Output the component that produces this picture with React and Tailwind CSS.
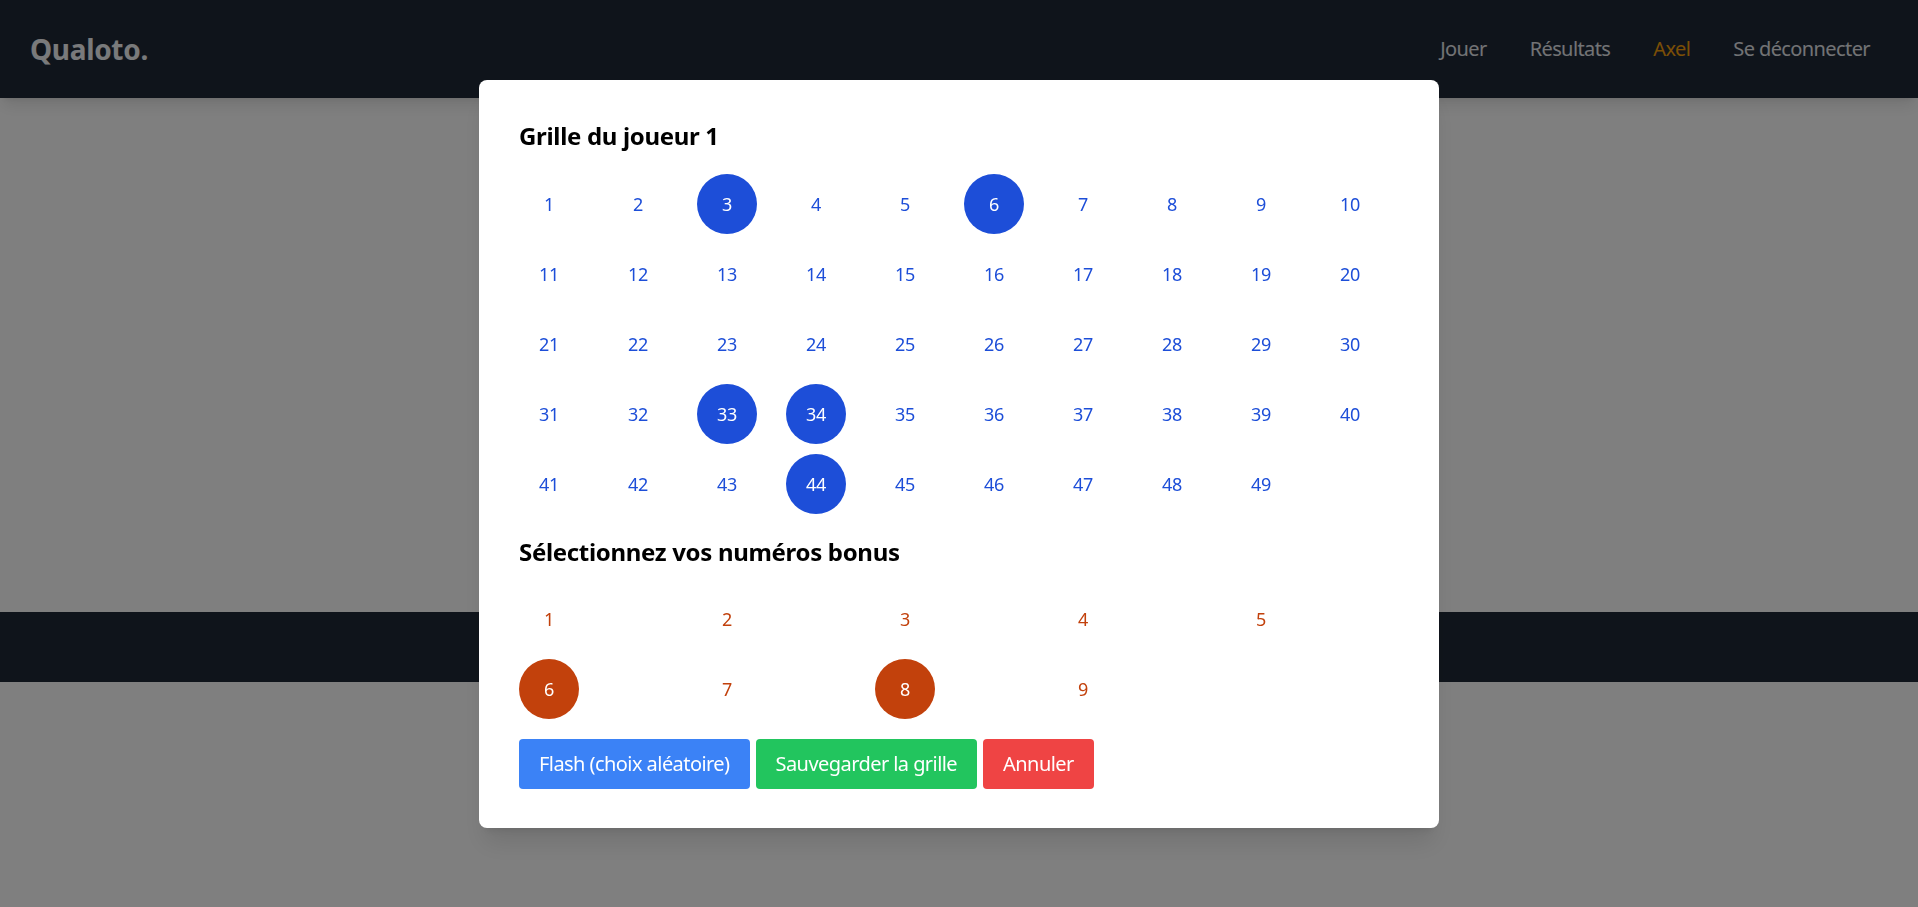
const GRID = Array.from({ length: 49 }, (_, i) => i + 1)
const BONUS = Array.from({ length: 9 }, (_, i) => i + 1)
const PICKED = [3, 6, 33, 34, 44]
const PICKED_BONUS = [6, 8]

function Ball({ n, on, tone }) {
  const styles = tone === 'blue'
    ? on ? 'bg-[#1d4ed8] text-white' : 'text-[#1d4ed8]'
    : on ? 'bg-[#c2410c] text-white' : 'text-[#c2410c]'
  return (
    <button className={`w-[60px] h-[60px] rounded-full flex items-center justify-center text-lg ${styles}`}>
      {n}
    </button>
  )
}

export default function App() {
  return (
    <div className="min-h-screen bg-white font-['Noto_Sans',sans-serif] tracking-[-0.02em]">
      <header className="h-[98px] bg-[#1f2937] flex items-center justify-between pl-[30px] pr-12 shadow-lg relative">
        <a className="text-[28px] font-bold text-gray-100">Qualoto.</a>
        <nav className="flex items-center gap-[43px] text-xl tracking-[-0.03em]">
          <a className="text-gray-200">Jouer</a>
          <a className="text-gray-200">Résultats</a>
          <a className="text-[#f59e0b]">Axel</a>
          <a className="text-gray-200">Se déconnecter</a>
        </nav>
      </header>
      <main className="h-[514px]" />
      <footer className="h-[70px] bg-[#1f2937]" />

      <div className="fixed inset-0 bg-black/50 flex items-center justify-center">
        <div className="w-[960px] bg-white rounded-lg px-10 pt-10 pb-[39px] shadow-xl">
          <h2 className="text-2xl leading-8 font-bold text-black mb-[22px]">Grille du joueur 1</h2>
          <div className="grid grid-cols-10 w-[890px] gap-y-2.5">
            {GRID.map(n => (
              <Ball key={n} n={n} on={PICKED.includes(n)} tone="blue" />
            ))}
          </div>
          <h2 className="text-2xl leading-8 font-bold text-black mt-[22px] mb-[21px]">Sélectionnez vos numéros bonus</h2>
          <div className="grid grid-cols-5 w-[890px] gap-y-2.5">
            {BONUS.map(n => (
              <Ball key={n} n={n} on={PICKED_BONUS.includes(n)} tone="orange" />
            ))}
          </div>
          <div className="flex gap-1.5 mt-5 tracking-[-0.035em]">
            <button className="bg-[#3b82f6] text-white text-xl leading-[30px] px-5 py-2.5 rounded">Flash (choix aléatoire)</button>
            <button className="bg-[#22c55e] text-white text-xl leading-[30px] px-5 py-2.5 rounded">Sauvegarder la grille</button>
            <button className="bg-[#ef4444] text-white text-xl leading-[30px] px-5 py-2.5 rounded">Annuler</button>
          </div>
        </div>
      </div>
    </div>
  )
}
